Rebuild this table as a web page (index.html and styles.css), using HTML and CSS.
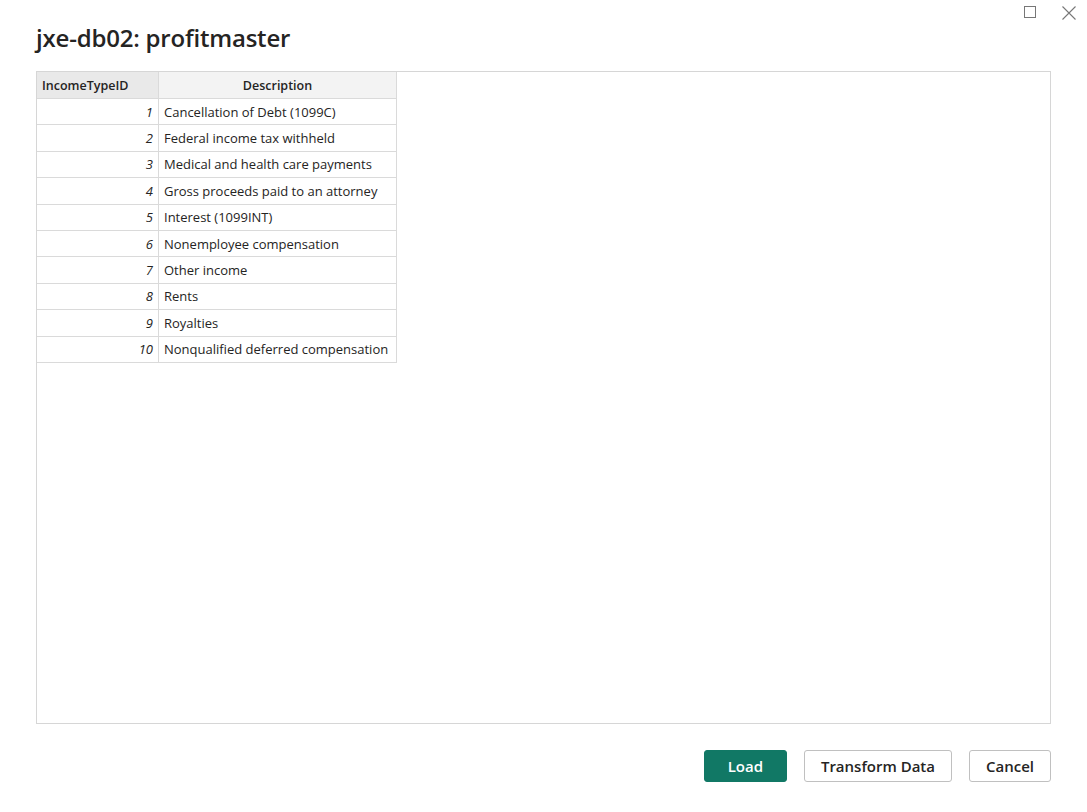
FILE: index.html
```html
<!DOCTYPE html>
<html>
<head>
    <title>jxe-db02: profitmaster</title>
    <link rel="stylesheet" href="styles.css">
</head>
<body>
    <div class="dialog">
        <div class="window-controls">
            <svg class="ctl" width="14" height="14" viewBox="0 0 14 14"><rect x="1.5" y="1.5" width="11" height="11" fill="none" stroke="#777" stroke-width="1"/></svg>
            <svg class="ctl" width="16" height="16" viewBox="0 0 16 16"><path d="M1.5 1.5 L14.5 14.5 M14.5 1.5 L1.5 14.5" stroke="#777" stroke-width="1.1" fill="none"/></svg>
        </div>
        <h1 class="title">jxe-db02: profitmaster</h1>

        <div class="preview">
            <table class="grid">
                <thead>
                    <tr><th class="col-id">IncomeTypeID</th><th class="col-desc">Description</th></tr>
                </thead>
                <tbody>
                    <tr><td class="num">1</td><td>Cancellation of Debt (1099C)</td></tr>
                    <tr><td class="num">2</td><td>Federal income tax withheld</td></tr>
                    <tr><td class="num">3</td><td>Medical and health care payments</td></tr>
                    <tr><td class="num">4</td><td>Gross proceeds paid to an attorney</td></tr>
                    <tr><td class="num">5</td><td>Interest (1099INT)</td></tr>
                    <tr><td class="num">6</td><td>Nonemployee compensation</td></tr>
                    <tr><td class="num">7</td><td>Other income</td></tr>
                    <tr><td class="num">8</td><td>Rents</td></tr>
                    <tr><td class="num">9</td><td>Royalties</td></tr>
                    <tr><td class="num">10</td><td>Nonqualified deferred compensation</td></tr>
                </tbody>
            </table>
        </div>

        <div class="actions">
            <button class="btn primary">Load</button>
            <button class="btn">Transform Data</button>
            <button class="btn">Cancel</button>
        </div>
    </div>
</body>
</html>
```

FILE: styles.css
```css
body { margin: 0; background: #fff; font-family: "Open Sans", "Noto Sans", sans-serif; color: #252423; }
.dialog { width: 1087px; height: 812px; box-sizing: border-box; padding: 0 36px; display: flex; flex-direction: column; }
.window-controls { display: flex; justify-content: flex-end; gap: 24px; height: 0; margin-right: -26px; padding-top: 5px; }
.ctl { display: block; }
.title { margin: 17px 0 0; font-size: 24px; font-weight: 600; line-height: 32px; letter-spacing: -0.2px; }
.preview { margin-top: 17px; height: 651px; border: 1px solid #d6d6d6; overflow: hidden; }
.grid { border-collapse: collapse; font-size: 13px; }
.grid th { height: 26px; padding: 0 5px; font-weight: 600; font-size: 12.5px; background: #f3f3f3; border-right: 1px solid #dadada; border-bottom: 1px solid #dadada; text-align: center; }
.grid th.col-id { width: 111px; background: #e9e9e9; text-align: left; }
.grid th.col-desc { width: 227px; }
.grid td { height: 25.4px; padding: 0 5px; border-right: 1px solid #dadada; border-bottom: 1px solid #dadada; white-space: nowrap; }
.grid td.num { text-align: right; font-style: italic; }
.actions { display: flex; justify-content: flex-end; gap: 17px; margin-top: 26px; }
.btn { height: 32px; padding: 0 16px; font-family: inherit; font-size: 15px; font-weight: 600; color: #252423; background: #fff; border: 1px solid #c0c0c0; border-radius: 3px; }
.btn.primary { width: 83px; background: #117865; border-color: #117865; color: #fff; }
```
